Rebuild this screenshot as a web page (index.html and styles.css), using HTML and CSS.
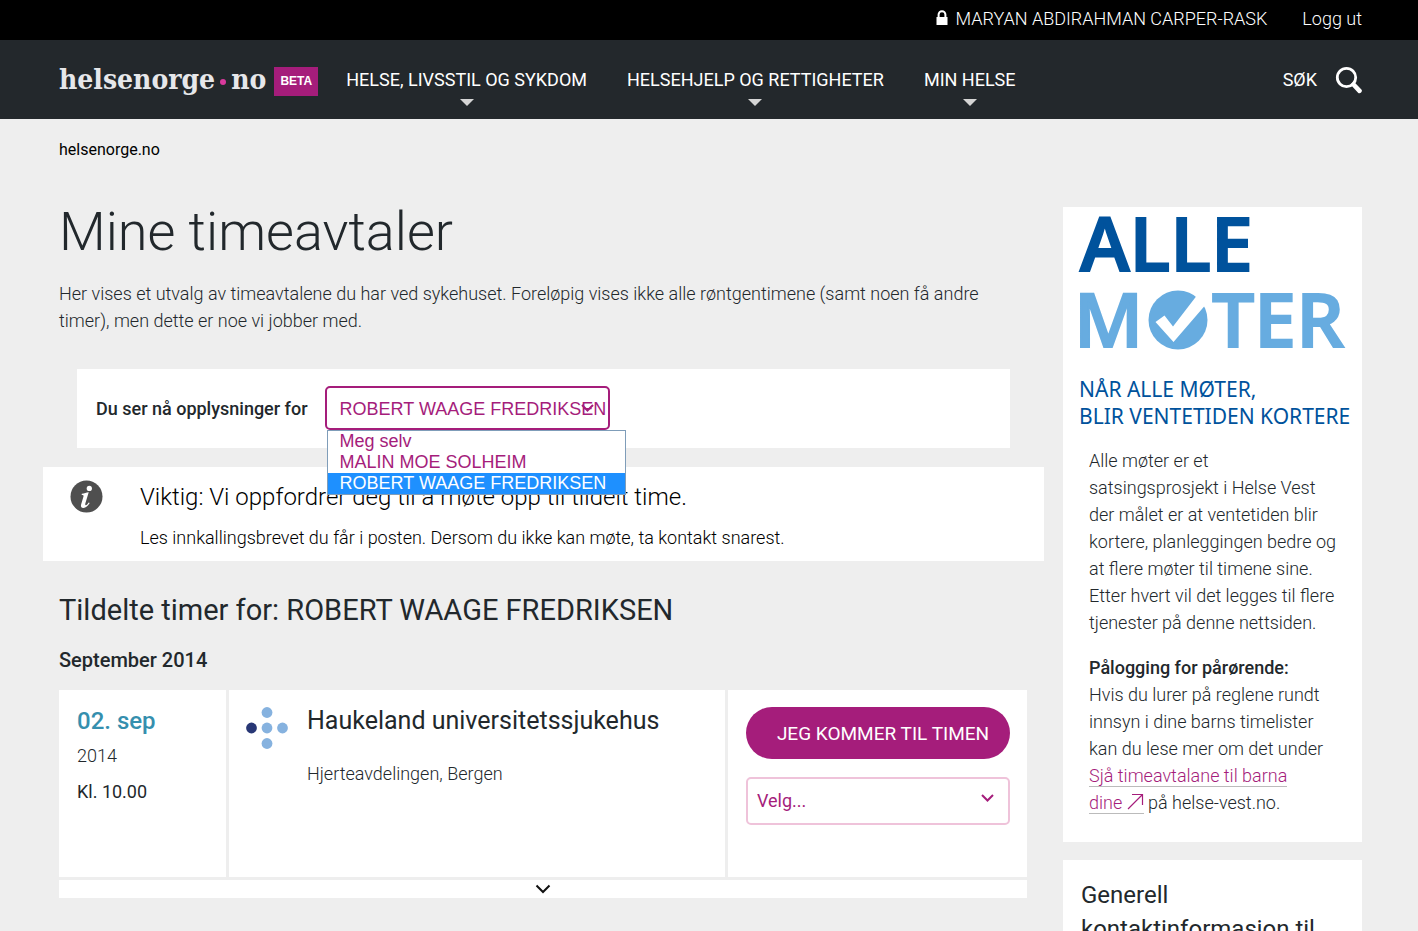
FILE: index.html
```html
<!DOCTYPE html>
<html lang="no">
<head>
<meta charset="utf-8">
<title>Mine timeavtaler – helsenorge.no</title>
<link rel="stylesheet" href="styles.css">
</head>
<body>
<div class="userbar">
  <svg class="lock" viewBox="0 0 12 16" aria-hidden="true"><path d="M2.600 8V4.600a3.400 3.400 0 0 1 6.800 0V8" fill="none" stroke="#fff" stroke-width="2"/><rect x="0.500" y="7" width="11" height="8" fill="#fff"/></svg>
  <span class="user-name">MARYAN ABDIRAHMAN CARPER-RASK</span>
  <a class="logout" href="#">Logg ut</a>
</div>
<header class="header">
  <a class="logo" href="#"><span>helsenorge</span><i class="logo-dot"></i><span>no</span></a>
  <span class="beta">BETA</span>
  <nav class="nav">
    <a class="nav-item" href="#">HELSE, LIVSSTIL OG SYKDOM</a>
    <a class="nav-item" href="#">HELSEHJELP OG RETTIGHETER</a>
    <a class="nav-item" href="#">MIN HELSE</a>
  </nav>
  <button class="search" type="button">SØK
    <svg class="search-icon" viewBox="0 0 28 28" aria-hidden="true"><circle cx="12.500" cy="11.500" r="9.200" fill="none" stroke="#fff" stroke-width="2.800"/><path d="M19.500 18.500l6 6.300" stroke="#fff" stroke-width="4.600" stroke-linecap="round"/></svg>
  </button>
</header>
<div class="page">
  <main class="main">
    <a class="breadcrumb" href="#">helsenorge.no</a>
    <h1 class="title">Mine timeavtaler</h1>
    <p class="intro">Her vises et utvalg av timeavtalene du har ved sykehuset. Foreløpig vises ikke alle røntgentimene (samt noen få andre timer), men dette er noe vi jobber med.</p>
    <section class="person">
      <label class="person-label" for="person">Du ser nå opplysninger for</label>
      <div class="select-wrap">
        <select class="person-select" id="person"><option>Meg selv</option><option>MALIN MOE SOLHEIM</option><option selected>ROBERT WAAGE FREDRIKSEN</option></select>
        <svg class="person-chevron" viewBox="0 0 13 8" aria-hidden="true"><path d="M1 1l5.500 5.500L12 1" fill="none" stroke="#a51d7b" stroke-width="2"/></svg>
        <ul class="options">
          <li>Meg selv</li>
          <li>MALIN MOE SOLHEIM</li>
          <li class="chosen">ROBERT WAAGE FREDRIKSEN</li>
        </ul>
      </div>
    </section>
    <section class="alert">
      <svg class="info" viewBox="0 0 34 34" aria-hidden="true"><circle cx="17" cy="17" r="16.500" fill="#4f4f4f"/><circle cx="19.900" cy="8.700" r="2.700" fill="#fff"/><path d="M12.200 14.200c2.600-.3 4.600-1.100 7.100-1.500l-3.300 10.800c-.5 1.700-.4 2.500.3 2.500.8 0 1.900-1.300 3-2.900l1 .7c-1.900 3.200-3.900 5-6.500 5-2.200 0-3-1.500-2.300-3.900l2.400-7.800c.3-1.100 0-1.500-1-1.600l-.9-.1z" fill="#fff"/></svg>
      <div>
        <h2 class="alert-title">Viktig: Vi oppfordrer deg til å møte opp til tildelt time.</h2>
        <p class="alert-text">Les innkallingsbrevet du får i posten. Dersom du ikke kan møte, ta kontakt snarest.</p>
      </div>
    </section>
    <h2 class="heading">Tildelte timer for: ROBERT WAAGE FREDRIKSEN</h2>
    <h3 class="month">September 2014</h3>
    <article class="appointment">
      <div class="when">
        <div class="date">02. sep</div>
        <div class="year">2014</div>
        <div class="time">Kl. 10.00</div>
      </div>
      <div class="where">
        <svg class="dots" viewBox="0 0 42 42" aria-hidden="true"><g fill="#86b2df"><circle cx="21" cy="5.500" r="5.400"/><circle cx="21" cy="21" r="5.400"/><circle cx="36.500" cy="21" r="5.400"/><circle cx="21" cy="36.500" r="5.400"/></g><circle cx="5.500" cy="21" r="5.400" fill="#283775"/></svg>
        <div>
          <h4 class="hospital">Haukeland universitetssjukehus</h4>
          <p class="dept">Hjerteavdelingen, Bergen</p>
        </div>
      </div>
      <div class="actions">
        <button class="confirm" type="button">JEG KOMMER TIL TIMEN</button>
        <div class="select-wrap">
          <select class="choose" aria-label="Velg"><option>Velg...</option></select>
          <svg class="choose-chevron" viewBox="0 0 13 8" aria-hidden="true"><path d="M1 1l5.500 5.500L12 1" fill="none" stroke="#a51d7b" stroke-width="2"/></svg>
        </div>
      </div>
    </article>
    <button class="expand" type="button" aria-label="Vis mer"><svg class="expand-icon" viewBox="0 0 16 10" aria-hidden="true"><path d="M1.500 1.500L8 8l6.500-6.500" fill="none" stroke="#111" stroke-width="2"/></svg></button>
  </main>
  <aside class="side">
    <section class="panel">
      <svg class="campaign" viewBox="0 0 299 227" role="img" aria-label="Alle møter">
        <text class="c-big c-dark" x="17" y="64">ALLE</text>
        <g class="c-light">
          <text class="c-big" x="11" y="140">M</text>
          <text class="c-big" x="149" y="140">TER</text>
          <circle cx="115" cy="113" r="29.500"/>
        </g>
        <path d="M92.500 115l9-6.500 8.500 11L135 87l10 8L110.500 135z" fill="#fff"/>
        <text class="c-small c-dark" x="16" y="190">NÅR ALLE MØTER,</text>
        <text class="c-small c-dark" x="16" y="217">BLIR VENTETIDEN KORTERE</text>
      </svg>
      <div class="panel-text">
        <p>Alle møter er et satsingsprosjekt i Helse Vest der målet er at ventetiden blir kortere, planleggingen bedre og at flere møter til timene sine. Etter hvert vil det legges til flere tjenester på denne nettsiden.</p>
        <p><strong>Pålogging for pårørende:</strong><br>Hvis du lurer på reglene rundt innsyn i dine barns timelister kan du lese mer om det under <a class="link" href="#">Sjå timeavtalane til barna <span class="keep">dine <svg class="ext" viewBox="0 0 17 17" aria-hidden="true"><path d="M1 16L15.500 1.500M5 1.500h10.500V12" fill="none" stroke="#a51d7b" stroke-width="1.200"/></svg></span></a> på helse-vest.no.</p>
      </div>
    </section>
    <section class="panel contact">
      <h2 class="contact-title">Generell kontaktinformasjon til</h2>
    </section>
  </aside>
</div>
</body>
</html>
```
FILE: styles.css
```css
* { box-sizing: border-box; }
body {
  margin: 0;
  height: 100vh;
  overflow: hidden;
  background: #eee;
  color: #22282c;
  font: 300 18px/27px Roboto, sans-serif;
}
h1, h2, h3, h4, p, ul { margin: 0; padding: 0; }
a { color: inherit; text-decoration: none; }
button, select { font: inherit; }
svg { display: block; flex: none; }

.userbar {
  display: flex;
  align-items: center;
  justify-content: flex-end;
  height: 40px;
  padding: 0 56px 4px;
  background: #000;
  color: #fff;
}
.lock { width: 12px; height: 16px; }
.user-name { margin-left: 8px; }
.logout { margin-left: 35px; }

.header {
  display: flex;
  align-items: center;
  height: 79px;
  padding: 0 56px 0 59px;
  background: #23282c;
  color: #fff;
}
.logo {
  display: flex;
  align-items: center;
  font: bold 28px/36px "DejaVu Serif Condensed", "DejaVu Serif", serif;
  font-stretch: condensed;
  color: #e6e7ea;
}
.logo-dot {
  width: 6px;
  height: 6px;
  margin: 5px 5px 0;
  border-radius: 50%;
  background: #d93a9d;
}
.beta {
  width: 44px;
  margin: 4px 28px 0 8px;
  background: #a51d7b;
  font: bold 12px/29px "Liberation Sans", Arial, sans-serif;
  text-align: center;
}
.nav { display: flex; gap: 40px; }
.nav-item {
  display: flex;
  flex-direction: column;
  align-items: center;
  gap: 6px;
  padding-top: 13px;
  font-weight: 400;
}
.nav-item::after {
  content: "";
  border: 7px solid transparent;
  border-top-color: #d5d5d5;
  border-bottom: 0;
}
.search {
  display: flex;
  align-items: center;
  gap: 17px;
  margin-left: auto;
  padding: 0;
  border: 0;
  background: none;
  color: #fff;
  font-weight: 400;
}
.search-icon { width: 28px; height: 28px; }

.page {
  display: grid;
  grid-template-columns: minmax(0, 1fr) 299px;
  gap: 36px;
  padding: 16px 56px 0 59px;
}
.breadcrumb { color: #000; font-size: 16px; font-weight: 400; }
.title {
  margin-top: 37px;
  font-size: 54px;
  font-weight: 300;
  line-height: 64px;
}
.intro { margin-top: 16px; }
.person {
  display: flex;
  align-items: center;
  gap: 17px;
  margin: 35px 17px 0 18px;
  padding: 17px 19px 18px;
  background: #fff;
}
.person-label { font-weight: 500; }
.select-wrap { position: relative; }
.person-select, .choose {
  display: block;
  appearance: none;
  background: #fff;
  color: #a51d7b;
}
.person-select {
  width: 285px;
  height: 44px;
  padding: 1px 0 0 13px;
  border: 2px solid #a51d7b;
  border-radius: 5px;
  font: 18px "Liberation Sans", Arial, sans-serif;
}
.person-chevron {
  position: absolute;
  top: 18px;
  right: 16px;
  width: 13px;
  height: 8px;
}
.options {
  position: absolute;
  z-index: 1;
  top: 44px;
  left: 2px;
  width: 299px;
  border: 1px solid #7f9db9;
  background: #fff;
  color: #a51d7b;
  font: 18px/21px "Liberation Sans", Arial, sans-serif;
  list-style: none;
}
.options li { padding-left: 12px; }
.options .chosen { background: #1e90ff; color: #fff; }
.alert {
  display: flex;
  gap: 37px;
  margin: 19px -17px 0 -16px;
  padding: 13px 27px 10px;
  background: #fff;
  color: #000;
}
.info { width: 33px; height: 33px; }
.alert-title { font-size: 24px; font-weight: 300; line-height: 34px; }
.alert-text { margin-top: 10px; }
.heading { margin-top: 30px; font-size: 29px; font-weight: 400; line-height: 38px; }
.month { margin-top: 17px; font-size: 20px; font-weight: 500; line-height: 28px; }
.appointment {
  display: grid;
  grid-template-columns: 167px minmax(0, 1fr) 299px;
  gap: 3px;
  min-height: 187px;
  margin-top: 16px;
}
.when, .where, .actions { background: #fff; }
.when { padding: 14px 18px; }
.date { color: #358fae; font-size: 24px; font-weight: 500; line-height: 34px; }
.year { margin-top: 4px; }
.time { margin-top: 9px; font-weight: 400; }
.where { display: flex; gap: 19px; padding: 14px 17px; }
.dots { width: 42px; height: 42px; margin-top: 3px; }
.hospital { font-size: 25px; font-weight: 400; line-height: 34px; }
.dept { margin-top: 22px; }
.actions { padding: 17px 17px 17px 18px; }
.confirm {
  display: block;
  width: 100%;
  height: 52px;
  padding: 0 18px 0 28px;
  border: 0;
  border-radius: 26px;
  background: #a51d7b;
  color: #fff;
  font-size: 19px;
  font-weight: 400;
  white-space: nowrap;
}
.choose {
  width: 100%;
  height: 48px;
  margin-top: 18px;
  padding: 0 9px 2px;
  border: 2px solid #efc3da;
  border-radius: 5px;
  font-weight: 400;
}
.choose-chevron {
  position: absolute;
  top: 17px;
  right: 16px;
  width: 13px;
  height: 8px;
}
.expand {
  display: flex;
  justify-content: center;
  align-items: center;
  width: 100%;
  height: 18px;
  margin-top: 3px;
  padding: 0;
  border: 0;
  background: #fff;
}
.expand-icon { width: 16px; height: 10px; }

.side { padding-top: 72px; }
.panel { background: #fff; }
.campaign { width: 100%; }
.c-big { font: 600 75px "Open Sans", sans-serif; stroke-width: 2px; }
.c-small { font: 400 21px "Noto Sans", sans-serif; }
.c-dark { fill: #00529c; }
.c-light { fill: #67ace0; }
.c-big.c-dark { stroke: #00529c; }
.c-light .c-big { stroke: #67ace0; }
.panel-text { padding: 13px 26px 26px; }
.panel-text p + p { margin-top: 18px; }
.panel-text strong { font-weight: 500; }
.link { border-bottom: 1px solid #bbb; color: #a51d7b; }
.keep { white-space: nowrap; }
.ext { display: inline-block; width: 17px; height: 17px; vertical-align: -1px; }
.contact { margin-top: 18px; padding: 18px; }
.contact-title { font-size: 24px; font-weight: 400; line-height: 34px; }
```
